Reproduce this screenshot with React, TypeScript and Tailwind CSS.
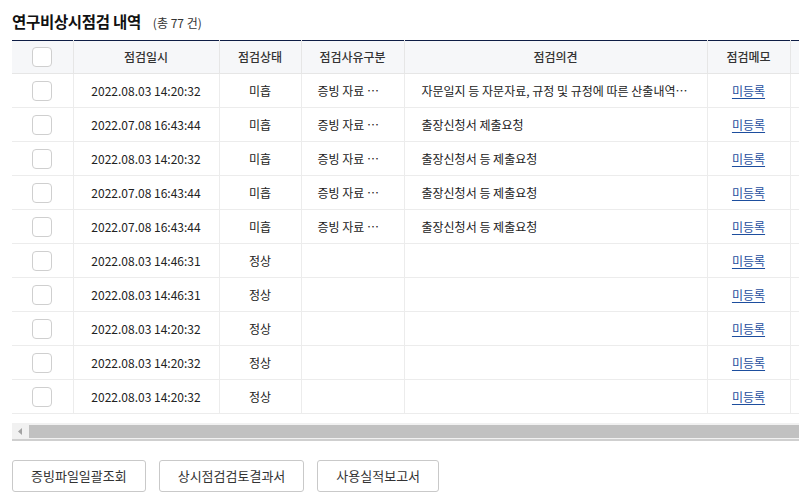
import React from 'react';

interface Row {
  date: string;
  status: string;
  reason: string;
  opinion: string;
}

const ROWS: Row[] = [
  { date: '2022.08.03 14:20:32', status: '미흡', reason: '증빙 자료 누락', opinion: '자문일지 등 자문자료, 규정 및 규정에 따른 산출내역 제출요청' },
  { date: '2022.07.08 16:43:44', status: '미흡', reason: '증빙 자료 누락', opinion: '출장신청서 제출요청' },
  { date: '2022.08.03 14:20:32', status: '미흡', reason: '증빙 자료 누락', opinion: '출장신청서 등 제출요청' },
  { date: '2022.07.08 16:43:44', status: '미흡', reason: '증빙 자료 누락', opinion: '출장신청서 등 제출요청' },
  { date: '2022.07.08 16:43:44', status: '미흡', reason: '증빙 자료 누락', opinion: '출장신청서 등 제출요청' },
  { date: '2022.08.03 14:46:31', status: '정상', reason: '', opinion: '' },
  { date: '2022.08.03 14:46:31', status: '정상', reason: '', opinion: '' },
  { date: '2022.08.03 14:20:32', status: '정상', reason: '', opinion: '' },
  { date: '2022.08.03 14:20:32', status: '정상', reason: '', opinion: '' },
  { date: '2022.08.03 14:20:32', status: '정상', reason: '', opinion: '' },
];

function Checkbox() {
  return <span className="inline-block w-[20px] h-[20px] rounded-[4px] border border-[#cfcfcf] bg-white align-middle" />;
}

export default function App() {
  return (
    <div
      className="w-[799px] h-[498px] bg-white overflow-hidden text-[#222]"
      style={{ fontFamily: '"Noto Sans CJK KR", "Noto Sans", sans-serif' }}
    >
      {/* Title */}
      <div className="flex items-baseline pl-3 pt-[10px] h-[40px]">
        <h2 className="text-[15.5px] font-bold text-[#111] tracking-[-0.3px]">연구비상시점검 내역</h2>
        <span className="ml-[12px] text-[12px] text-[#333]">(총 77 건)</span>
      </div>

      {/* Table */}
      <div className="ml-3 w-[787px] overflow-hidden">
        <table className="table-fixed border-collapse w-[880px] text-[12px]">
          <colgroup>
            <col className="w-[61px]" />
            <col className="w-[146px]" />
            <col className="w-[82px]" />
            <col className="w-[103px]" />
            <col className="w-[303px]" />
            <col className="w-[83px]" />
            <col className="w-[102px]" />
          </colgroup>
          <thead>
            <tr className="h-[33px] bg-[#f6f7f9] border-t border-[#0e1d45] text-[#333]">
              <th className="border-b border-[#e6e6e6] font-medium">
                <Checkbox />
              </th>
              <th className="border-l border-b border-[#e6e6e6] font-medium">점검일시</th>
              <th className="border-l border-b border-[#e6e6e6] font-medium">점검상태</th>
              <th className="border-l border-b border-[#e6e6e6] font-medium">점검사유구분</th>
              <th className="border-l border-b border-[#e6e6e6] font-medium">점검의견</th>
              <th className="border-l border-b border-[#e6e6e6] font-medium">점검메모</th>
              <th className="border-l border-b border-[#e6e6e6] font-medium" />
            </tr>
          </thead>
          <tbody>
            {ROWS.map((r, i) => (
              <tr key={i} className="h-[34px]">
                <td className="border-b border-[#ececec] text-center">
                  <Checkbox />
                </td>
                <td className="border-l border-b border-[#ececec] text-center">{r.date}</td>
                <td className="border-l border-b border-[#ececec] text-center">{r.status}</td>
                <td className="border-l border-b border-[#ececec] pl-4 pr-[22px] truncate">{r.reason}</td>
                <td className="border-l border-b border-[#ececec] pl-[17px] pr-[17px] truncate">{r.opinion}</td>
                <td className="border-l border-b border-[#ececec] text-center">
                  <a href="#" className="text-[#1d4e9e] underline underline-offset-2">미등록</a>
                </td>
                <td className="border-l border-b border-[#ececec]" />
              </tr>
            ))}
          </tbody>
        </table>

        {/* Horizontal scrollbar */}
        <div className="mt-[9px] h-[18px] bg-[#f1f1f1] border-b-2 border-[#cfcfcf] flex items-center">
          <div className="w-[17px] flex justify-center">
            <svg width="5" height="7" viewBox="0 0 5 7">
              <path d="M4 0 L0 3.5 L4 7 Z" fill="#a3a3a3" />
            </svg>
          </div>
          <div className="h-[13px] flex-1 bg-[#c1c1c1]" />
        </div>
      </div>

      {/* Buttons */}
      <div className="flex gap-[13px] pl-3 mt-[19px]">
        {['증빙파일일괄조회', '상시점검검토결과서', '사용실적보고서'].map((t) => (
          <button
            key={t}
            className="h-[32px] px-[18px] border border-[#c9c9c9] rounded-[3px] bg-white text-[13px] text-[#333]"
          >
            {t}
          </button>
        ))}
      </div>
    </div>
  );
}
